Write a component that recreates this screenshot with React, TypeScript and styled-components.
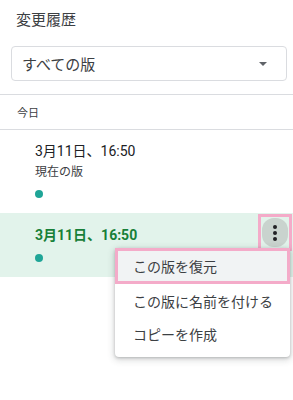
import React from 'react'
import styled, { createGlobalStyle } from 'styled-components'

const GlobalStyle = createGlobalStyle`
  body {
    margin: 0;
    background: #ffffff;
    font-family: Roboto, 'Noto Sans CJK JP', sans-serif;
    color: #3c4043;
  }
`

const menuItems = ['この版を復元', 'この版に名前を付ける', 'コピーを作成']

const App: React.FC = () => {
  return (
    <Panel>
      <GlobalStyle />
      <Title>変更履歴</Title>
      <Select>
        <SelectText>すべての版</SelectText>
        <Caret />
      </Select>
      <SectionLabel>今日</SectionLabel>
      <Version>
        <VersionDate>3月11日、16:50</VersionDate>
        <VersionNote>現在の版</VersionNote>
        <Dot />
      </Version>
      <Version selected>
        <VersionDate selected>3月11日、16:50</VersionDate>
        <Dot />
        <MoreButton>
          <MoreInner>
            <svg width="4" height="16" viewBox="0 0 4 16">
              <circle cx="2" cy="2" r="2" fill="#202124" />
              <circle cx="2" cy="8" r="2" fill="#202124" />
              <circle cx="2" cy="14" r="2" fill="#202124" />
            </svg>
          </MoreInner>
        </MoreButton>
      </Version>
      <Menu>
        {menuItems.map((label, index) => (
          <MenuItem key={label} active={index === 0}>
            {label}
          </MenuItem>
        ))}
      </Menu>
    </Panel>
  )
}

const Panel = styled.div`
  position: relative;
  width: 293px;
  height: 400px;
  overflow: hidden;
`

const Title = styled.div`
  padding: 9px 16px 0;
  font-size: 15px;
  line-height: 22px;
  color: #3c4043;
`

const Select = styled.div`
  display: flex;
  align-items: center;
  justify-content: space-between;
  box-sizing: border-box;
  height: 35px;
  margin: 15px 6px 0 11px;
  padding: 0 19px 0 10px;
  border: 1px solid #dadce0;
  border-radius: 4px;
`

const SelectText = styled.span`
  font-size: 15px;
  color: #3c4043;
`

const Caret = styled.span`
  width: 0;
  height: 0;
  border-left: 4px solid transparent;
  border-right: 4px solid transparent;
  border-top: 4px solid #5f6368;
`

const SectionLabel = styled.div`
  display: flex;
  align-items: center;
  height: 34px;
  margin-top: 13px;
  padding-left: 17px;
  font-size: 11px;
  color: #3c4043;
  border-top: 1px solid #dadce0;
  border-bottom: 1px solid #dadce0;
`

const Version = styled.div<{ selected?: boolean }>`
  position: relative;
  display: flex;
  flex-direction: column;
  align-items: flex-start;
  padding: ${(p) => (p.selected ? '12px 0 15px 35px' : '11px 0 15px 35px')};
  background: ${(p) => (p.selected ? '#e2f3eb' : 'transparent')};
`

const VersionDate = styled.div<{ selected?: boolean }>`
  font-size: 14px;
  line-height: 20px;
  font-weight: ${(p) => (p.selected ? 700 : 400)};
  color: ${(p) => (p.selected ? '#188038' : '#202124')};
`

const VersionNote = styled.div`
  margin-top: 2px;
  font-size: 12px;
  line-height: 18px;
  color: #3c4043;
`

const Dot = styled.span`
  width: 8px;
  height: 8px;
  margin-top: 9px;
  border-radius: 50%;
  background: #1fa597;
`

const MoreButton = styled.div`
  position: absolute;
  top: 1px;
  right: 1px;
  box-sizing: border-box;
  width: 34px;
  height: 37px;
  padding: 1px;
  border: 3px solid #f4abc9;
  display: flex;
`

const MoreInner = styled.div`
  flex: 1;
  display: flex;
  align-items: center;
  justify-content: center;
  border-radius: 12px;
  background: #c9d3ce;
`

const Menu = styled.div`
  position: absolute;
  left: 115px;
  top: 248px;
  width: 175px;
  box-sizing: border-box;
  padding: 0 0 7px;
  background: #ffffff;
  border-radius: 4px;
  box-shadow: 0 1px 3px rgba(60, 64, 67, 0.3), 0 2px 6px 2px rgba(60, 64, 67, 0.15);
`

const MenuItem = styled.div<{ active?: boolean }>`
  display: flex;
  align-items: center;
  box-sizing: border-box;
  height: ${(p) => (p.active ? '36px' : '33px')};
  padding-left: ${(p) => (p.active ? '15px' : '18px')};
  font-size: 14px;
  color: #3c4043;
  background: ${(p) => (p.active ? '#f1f3f4' : 'transparent')};
  border: ${(p) => (p.active ? '3px solid #f4abc9' : 'none')};
`

export default App
